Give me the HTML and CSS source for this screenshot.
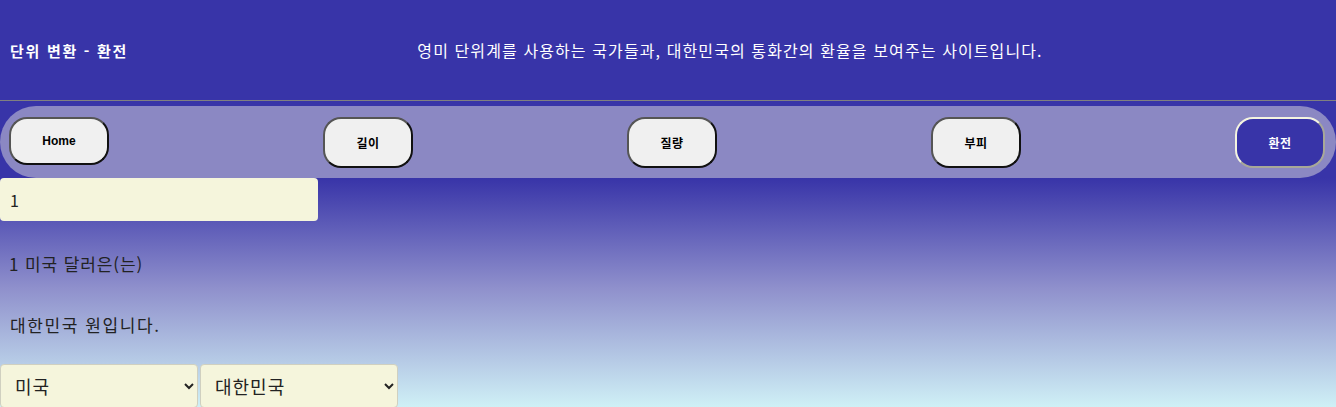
FILE: index.html
```html
<!DOCTYPE html>
<html lang="ko">
<head>
<meta charset="utf-8">
<title>단위 변환 - 환전</title>
<link rel="stylesheet" href="styles.css">
</head>
<body>
<header class="top">
  <h1 class="title">단위 변환 - 환전</h1>
  <p class="desc">영미 단위계를 사용하는 국가들과, 대한민국의 통화간의 환율을 보여주는 사이트입니다.</p>
</header>
<div class="rule"></div>
<div class="nav-wrap">
  <nav class="nav">
    <button class="btn btn-home">Home</button>
    <button class="btn">길이</button>
    <button class="btn">질량</button>
    <button class="btn">부피</button>
    <button class="btn btn-active">환전</button>
  </nav>
</div>
<main class="main">
  <input class="amount" type="text" value="1">
  <p class="line line-first">1 미국 달러은(는)</p>
  <p class="line line-second">대한민국 원입니다.</p>
  <div class="selects">
    <select class="sel"><option>미국</option></select>
    <select class="sel"><option>대한민국</option></select>
  </div>
</main>
</body>
</html>
```
FILE: styles.css
```css
html, body {
  margin: 0;
  padding: 0;
}
body {
  font-family: "Noto Sans CJK KR", "Noto Sans", sans-serif;
  background: #cdeef5;
  overflow: hidden;
}
.top {
  height: 100px;
  background: #3834a8;
  display: flex;
  align-items: center;
  color: #fff;
}
.title {
  margin: 0 0 0 10px;
  font-size: 15px;
  font-weight: bold;
  letter-spacing: 1.7px;
  white-space: nowrap;
}
.desc {
  flex: 1;
  margin: 0;
  text-align: center;
  font-size: 16px;
  letter-spacing: 1.1px;
  padding-right: 4px;
}
.rule {
  height: 1px;
  background: #808080;
}
.nav-wrap {
  background: #3834a8;
  padding-top: 5px;
}
.nav {
  height: 72px;
  background: #8b88c3;
  border-radius: 36px;
  display: flex;
  align-items: center;
  justify-content: space-between;
  padding: 0 11px 0 9px;
}
.btn {
  width: 90px;
  height: 51px;
  margin-top: 1px;
  border-radius: 18px;
  border: 2px solid;
  border-color: #555 #111 #111 #555;
  background: #f0f0f0;
  color: #000;
  font-family: "Noto Sans CJK KR", "Liberation Sans", sans-serif;
  font-size: 12px;
  font-weight: bold;
  letter-spacing: 0.5px;
  padding: 0;
}
.btn-home {
  width: 100px;
  height: 48px;
  margin-top: -2px;
  letter-spacing: 0;
  font-family: "Liberation Sans", "Noto Sans CJK KR", sans-serif;
}
.btn-active {
  background: #3834a8;
  color: #fff;
  border-color: #f4f4e0 #a8a898 #a8a898 #f4f4e0;
}
.main {
  background: linear-gradient(#3834a8 0px, #8f90cc 110px, #cff0f6 229px);
  height: 229px;
  color: #222;
}
.amount {
  display: block;
  box-sizing: border-box;
  width: 318px;
  height: 43px;
  margin: 0;
  border: none;
  border-radius: 4px;
  background: #f5f5dc;
  padding: 0 10px;
  font-family: "Noto Sans CJK KR", sans-serif;
  font-size: 16px;
  color: #222;
}
.line {
  margin: 0;
  padding-left: 9px;
  font-size: 17px;
  letter-spacing: 0.9px;
  line-height: 24px;
}
.line-first {
  margin-top: 31px;
}
.line-second {
  margin-top: 37px;
  padding-left: 10px;
  letter-spacing: 1.6px;
}
.selects {
  display: flex;
  gap: 2px;
  margin-top: 27px;
}
.sel {
  box-sizing: border-box;
  width: 198px;
  height: 44px;
  border: 1px solid #d0d0c0;
  border-radius: 4px;
  background: #f5f5dc;
  padding: 0 10px;
  font-family: "Noto Sans CJK KR", sans-serif;
  font-size: 18px;
  letter-spacing: 1px;
  color: #222;
}
```
